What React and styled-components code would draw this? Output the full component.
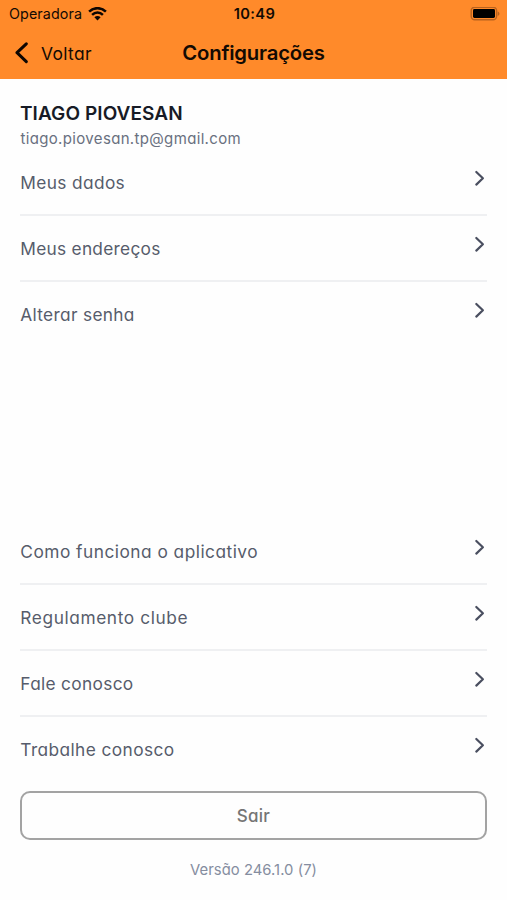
import React from 'react'
import styled, { createGlobalStyle } from 'styled-components'

const GlobalStyle = createGlobalStyle`
  * {
    box-sizing: border-box;
  }

  body {
    margin: 0;
    background-color: #ffffff;
    font-family: Inter, 'Liberation Sans', sans-serif;
  }
`

const Screen = styled.div`
  display: flex;
  flex-direction: column;
  height: 900px;
  width: 507px;
  background-color: #fefefe;
`

const Header = styled.header`
  height: 79px;
  background-color: #ff8a2a;
  color: #130a03;
`

const StatusBar = styled.div`
  display: grid;
  grid-template-columns: 1fr auto 1fr;
  align-items: center;
  height: 27px;
  padding: 0 7px 0 9px;
`

const Carrier = styled.div`
  display: flex;
  align-items: center;
  gap: 6px;
  font-size: 14.3px;
  letter-spacing: 0.1px;
`

const Clock = styled.div`
  font-size: 14.7px;
  font-weight: 600;
  letter-spacing: 0.3px;
`

const BatteryIcon = styled.svg`
  justify-self: end;
`

const NavBar = styled.div`
  display: grid;
  grid-template-columns: 1fr auto 1fr;
  align-items: center;
  height: 51px;
  padding: 0 14px;
`

const BackButton = styled.button`
  display: flex;
  align-items: center;
  gap: 12px;
  padding: 0;
  border: none;
  background: none;
  color: inherit;
  font-family: inherit;
  font-size: 17.4px;
  letter-spacing: 0.35px;
  font-feature-settings: 'cv11';
`

const BackLabel = styled.span`
  padding-top: 2px;
`

const Title = styled.h1`
  margin: 0;
  font-size: 20.3px;
  font-weight: 600;
  letter-spacing: -0.2px;
`

const Content = styled.main`
  display: flex;
  flex-direction: column;
  flex: 1;
  padding: 22px 20px 0;
  font-feature-settings: 'cv11';
`

const Name = styled.h2`
  margin: 0;
  color: #171b26;
  font-size: 19px;
  font-weight: 600;
  line-height: 26px;
  letter-spacing: 0.08px;
`

const Email = styled.p`
  margin: 0;
  height: 23px;
  padding-left: 0.5px;
  color: #697080;
  font-size: 15px;
  line-height: 24px;
  letter-spacing: 0.34px;
`

const Menu = styled.nav`
  display: flex;
  flex-direction: column;
`

const MenuItem = styled.a`
  display: flex;
  justify-content: space-between;
  height: 66px;
  padding: 20px 0 0;
  border-bottom: 2px solid #eff0f2;
  color: #565c6b;

  &:last-child {
    border-bottom-color: transparent;
  }
`

const Label = styled.span`
  padding-left: 0.3px;
  font-size: 17.3px;
  line-height: 25px;
  letter-spacing: ${({ $spacing }) => $spacing}px;
`

const Arrow = styled.svg`
  margin: 0 2px 0 0;
`

const Spacer = styled.div`
  flex: 1;
`

const LogoutButton = styled.button`
  height: 49px;
  margin-top: 8px;
  border: 2px solid #a3a3a3;
  border-radius: 10px;
  background: none;
  color: #757575;
  font-family: inherit;
  font-size: 17px;
  font-weight: 500;
  letter-spacing: 0.25px;
  font-feature-settings: inherit;
`

const Version = styled.p`
  height: 60px;
  margin: 0;
  color: #858da0;
  font-size: 14.8px;
  line-height: 60px;
  letter-spacing: 0.05px;
  text-align: center;
`

const accountItems = [
  { label: 'Meus dados', spacing: 0.37 },
  { label: 'Meus endereços', spacing: 0.27 },
  { label: 'Alterar senha', spacing: 0.32 },
]

const aboutItems = [
  { label: 'Como funciona o aplicativo', spacing: 0.49 },
  { label: 'Regulamento clube', spacing: 0.6 },
  { label: 'Fale conosco', spacing: 0.32 },
  { label: 'Trabalhe conosco', spacing: 0.41 },
]

function MenuList({ items }) {
  return (
    <Menu>
      {items.map(({ label, spacing }) => (
        <MenuItem key={label}>
          <Label $spacing={spacing}>{label}</Label>
          <Arrow width="11" height="17" viewBox="0 0 11 17" fill="none">
            <path d="M2.3 2L8.9 8.3L2.3 14.6" stroke="#4a4f60" strokeWidth="2.2" strokeLinecap="round" strokeLinejoin="round" />
          </Arrow>
        </MenuItem>
      ))}
    </Menu>
  )
}

export default function App() {
  return (
    <Screen>
      <GlobalStyle />
      <Header>
        <StatusBar>
          <Carrier>
            Operadora
            <svg width="19" height="14" viewBox="0 0 19 14" fill="none" stroke="#0d0602" strokeWidth="2.5">
              <path d="M1.1 4.6C5.8 0 13.2 0 17.9 4.6" />
              <path d="M4.1 7.8C7.2 4.8 11.8 4.8 14.9 7.8" />
              <path d="M9.5 13.4L6.4 10.3C8.2 8.7 10.8 8.7 12.6 10.3Z" fill="#0d0602" stroke="none" />
            </svg>
          </Carrier>
          <Clock>10:49</Clock>
          <BatteryIcon width="30" height="14" viewBox="0 0 30 14">
            <rect x="1.2" y="0.3" width="25.4" height="12.4" rx="3.5" fill="none" stroke="#b8621f" strokeWidth="1.4" />
            <rect x="3" y="2.1" width="22" height="8.9" rx="1.4" fill="#000000" />
            <path d="M27.7 4.6C30 5.3 30 8.3 27.7 9Z" fill="#b8621f" />
          </BatteryIcon>
        </StatusBar>
        <NavBar>
          <BackButton>
            <svg width="15" height="22" viewBox="0 0 15 22" fill="none">
              <path d="M12.3 1.8L3 10.7L12.3 19.6" stroke="#0d0602" strokeWidth="3" strokeLinecap="round" strokeLinejoin="round" />
            </svg>
            <BackLabel>Voltar</BackLabel>
          </BackButton>
          <Title>Configurações</Title>
        </NavBar>
      </Header>
      <Content>
        <Name>TIAGO PIOVESAN</Name>
        <Email>tiago.piovesan.tp@gmail.com</Email>
        <MenuList items={accountItems} />
        <Spacer />
        <MenuList items={aboutItems} />
        <LogoutButton>Sair</LogoutButton>
        <Version>Versão 246.1.0 (7)</Version>
      </Content>
    </Screen>
  )
}
